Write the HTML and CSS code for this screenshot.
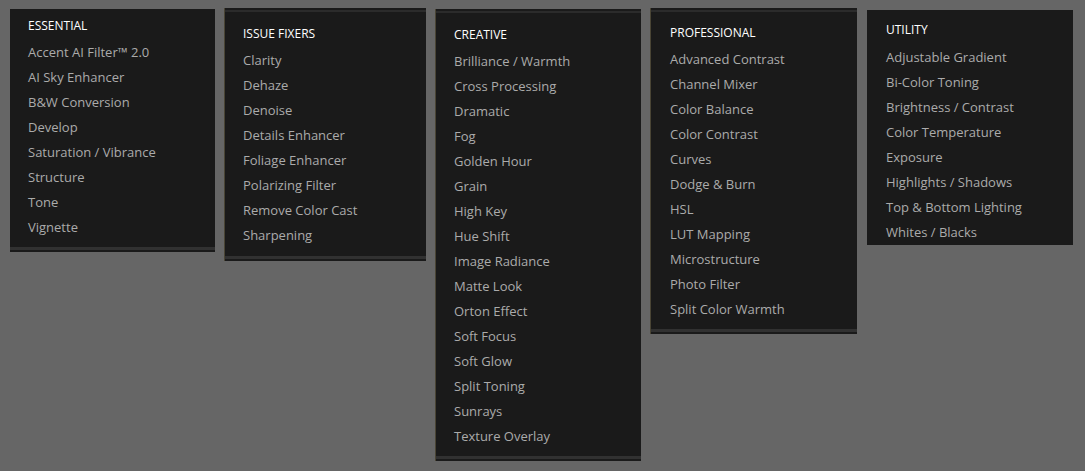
FILE: index.html
```html
<!DOCTYPE html>
<html lang="en">
<head>
    <meta charset="UTF-8">
    <meta name="viewport" content="width=device-width, initial-scale=1.0">
    <title>Filters</title>
    <link rel="stylesheet" href="styles.css">
</head>
<body>
    <div class="menu">
        <div class="panel essential">
            <h3>Essential</h3>
            <ul>
                <li>Accent AI Filter™ 2.0</li>
                <li>AI Sky Enhancer</li>
                <li>B&amp;W Conversion</li>
                <li>Develop</li>
                <li>Saturation / Vibrance</li>
                <li>Structure</li>
                <li>Tone</li>
                <li>Vignette</li>
            </ul>
        </div>
        <div class="panel fixers edged">
            <h3>Issue Fixers</h3>
            <ul>
                <li>Clarity</li>
                <li>Dehaze</li>
                <li>Denoise</li>
                <li>Details Enhancer</li>
                <li>Foliage Enhancer</li>
                <li>Polarizing Filter</li>
                <li>Remove Color Cast</li>
                <li>Sharpening</li>
            </ul>
        </div>
        <div class="panel creative edged">
            <h3>Creative</h3>
            <ul>
                <li>Brilliance / Warmth</li>
                <li>Cross Processing</li>
                <li>Dramatic</li>
                <li>Fog</li>
                <li>Golden Hour</li>
                <li>Grain</li>
                <li>High Key</li>
                <li>Hue Shift</li>
                <li>Image Radiance</li>
                <li>Matte Look</li>
                <li>Orton Effect</li>
                <li>Soft Focus</li>
                <li>Soft Glow</li>
                <li>Split Toning</li>
                <li>Sunrays</li>
                <li>Texture Overlay</li>
            </ul>
        </div>
        <div class="panel professional edged">
            <h3>Professional</h3>
            <ul>
                <li>Advanced Contrast</li>
                <li>Channel Mixer</li>
                <li>Color Balance</li>
                <li>Color Contrast</li>
                <li>Curves</li>
                <li>Dodge &amp; Burn</li>
                <li>HSL</li>
                <li>LUT Mapping</li>
                <li>Microstructure</li>
                <li>Photo Filter</li>
                <li>Split Color Warmth</li>
            </ul>
        </div>
        <div class="panel utility">
            <h3>Utility</h3>
            <ul>
                <li>Adjustable Gradient</li>
                <li>Bi-Color Toning</li>
                <li>Brightness / Contrast</li>
                <li>Color Temperature</li>
                <li>Exposure</li>
                <li>Highlights / Shadows</li>
                <li>Top &amp; Bottom Lighting</li>
                <li>Whites / Blacks</li>
            </ul>
        </div>
    </div>
</body>
</html>
```

FILE: styles.css
```css
html, body {
    margin: 0;
    padding: 0;
    background-color: #666;
    font-family: "Open Sans", Arial, sans-serif;
    height: 100vh;
    overflow: hidden;
}
.menu {
    display: flex;
    align-items: flex-start;
    gap: 9px;
    padding-left: 10px;
}
.panel {
    background: #1a1a1a;
    box-sizing: border-box;
    padding-left: 18px;
    box-shadow: inset 0 2px 0 #1a1a1a, inset 0 4px 0 #2b2b2b,
                inset 0 -2px 0 #1a1a1a, inset 0 -5px 0 #313131;
}
.edged {
    border-left: 1px solid #4a4535;
}
h3 {
    margin: 0;
    color: #fff;
    font-size: 12px;
    font-weight: normal;
    text-transform: uppercase;
    line-height: 25px;
    padding-bottom: 2px;
}
ul {
    list-style: none;
    margin: 0;
    padding: 0;
}
li {
    color: #ababab;
    font-size: 13px;
    line-height: 25px;
    white-space: nowrap;
}

/* each column sits a little differently in the original */
.essential {
    width: 205px;
    margin-top: 9px;
    padding-top: 4px;
    padding-bottom: 12px;
    box-shadow: inset 0 -2px 0 #1a1a1a, inset 0 -5px 0 #313131;
}
.fixers {
    width: 202px;
    margin-top: 8px;
    padding-top: 13px;
    padding-bottom: 13px;
}
.creative {
    width: 206px;
    margin-top: 9px;
    padding-top: 13px;
    padding-bottom: 12px;
}
.professional {
    width: 207px;
    margin-top: 8px;
    padding-top: 12px;
    padding-bottom: 12px;
    padding-left: 19px;
}
.utility {
    width: 206px;
    margin-top: 10px;
    margin-left: 1px;
    padding-top: 7px;
    padding-bottom: 0;
    padding-left: 19px;
    box-shadow: none;
}
.utility h3 {
    padding-bottom: 3px;
}
```
